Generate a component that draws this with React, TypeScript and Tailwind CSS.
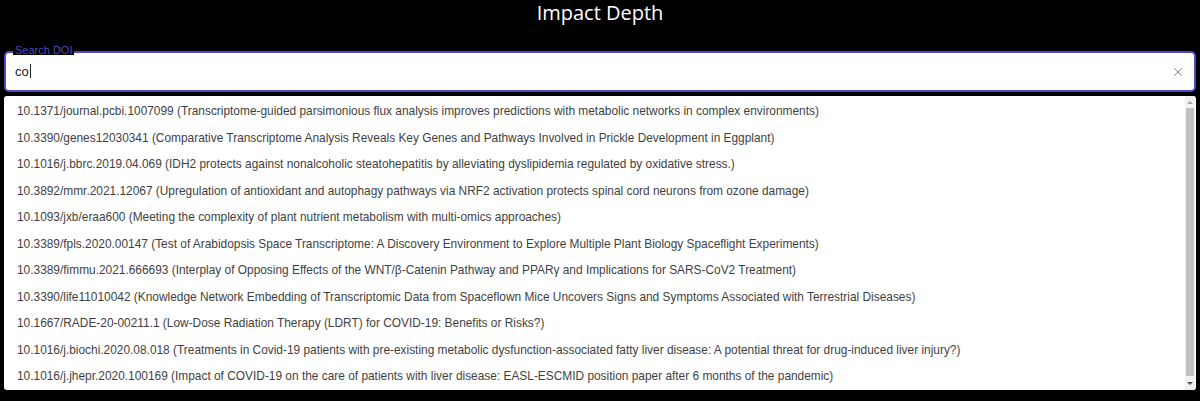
import { X } from "lucide-react";

const options = [
  "10.1371/journal.pcbi.1007099 (Transcriptome-guided parsimonious flux analysis improves predictions with metabolic networks in complex environments)",
  "10.3390/genes12030341 (Comparative Transcriptome Analysis Reveals Key Genes and Pathways Involved in Prickle Development in Eggplant)",
  "10.1016/j.bbrc.2019.04.069 (IDH2 protects against nonalcoholic steatohepatitis by alleviating dyslipidemia regulated by oxidative stress.)",
  "10.3892/mmr.2021.12067 (Upregulation of antioxidant and autophagy pathways via NRF2 activation protects spinal cord neurons from ozone damage)",
  "10.1093/jxb/eraa600 (Meeting the complexity of plant nutrient metabolism with multi-omics approaches)",
  "10.3389/fpls.2020.00147 (Test of Arabidopsis Space Transcriptome: A Discovery Environment to Explore Multiple Plant Biology Spaceflight Experiments)",
  "10.3389/fimmu.2021.666693 (Interplay of Opposing Effects of the WNT/β-Catenin Pathway and PPARγ and Implications for SARS-CoV2 Treatment)",
  "10.3390/life11010042 (Knowledge Network Embedding of Transcriptomic Data from Spaceflown Mice Uncovers Signs and Symptoms Associated with Terrestrial Diseases)",
  "10.1667/RADE-20-00211.1 (Low-Dose Radiation Therapy (LDRT) for COVID-19: Benefits or Risks?)",
  "10.1016/j.biochi.2020.08.018 (Treatments in Covid-19 patients with pre-existing metabolic dysfunction-associated fatty liver disease: A potential threat for drug-induced liver injury?)",
  "10.1016/j.jhepr.2020.100169 (Impact of COVID-19 on the care of patients with liver disease: EASL-ESCMID position paper after 6 months of the pandemic)",
];

export default function App() {
  return (
    <div className="h-[401px] w-full overflow-hidden bg-black font-['Liberation_Sans',Arial,sans-serif]">
      <h1 className="text-center font-['Open_Sans',sans-serif] text-[20px] leading-[26px] text-white">
        Impact Depth
      </h1>

      <div className="px-1 pt-[25px]">
        {/* outlined input */}
        <div className="relative flex h-[41px] items-center rounded-[5px] border-2 border-[#4d49bf] bg-white pl-[9px] pr-[9px]">
          <span className="absolute -top-[8px] left-[7px] bg-black px-[2px] text-[11px] leading-[10px] text-[#4d49bf]">
            Search DOI
          </span>
          <span className="flex-1 text-[13px] text-[#222]">
            co<span className="ml-px inline-block h-[14px] w-px translate-y-[2px] bg-[#222]" />
          </span>
          <X className="size-[14px] text-[#666]" strokeWidth={1.4} />
        </div>

        {/* dropdown */}
        <div className="mt-[4px] flex h-[294px] overflow-hidden rounded-[3px] bg-white">
          <ul className="flex-1 pt-[3px]">
            {options.map((o) => (
              <li
                key={o}
                className="flex h-[26.5px] items-center truncate px-[13px] text-[11.9px] text-[#3f3f3f]"
              >
                {o}
              </li>
            ))}
          </ul>
          <div className="mr-[1px] flex w-[10px] flex-col items-center bg-[#f1f1f1]">
            <div className="flex h-[12px] items-center justify-center">
              <div className="h-0 w-0 border-x-[3px] border-b-[3px] border-x-transparent border-b-[#a3a3a3]" />
            </div>
            <div className="w-[8px] flex-1 bg-[#c1c1c1]" />
            <div className="flex h-[14px] items-center justify-center">
              <div className="h-0 w-0 border-x-[3px] border-t-[3px] border-x-transparent border-t-[#505050]" />
            </div>
          </div>
        </div>
      </div>
    </div>
  );
}
